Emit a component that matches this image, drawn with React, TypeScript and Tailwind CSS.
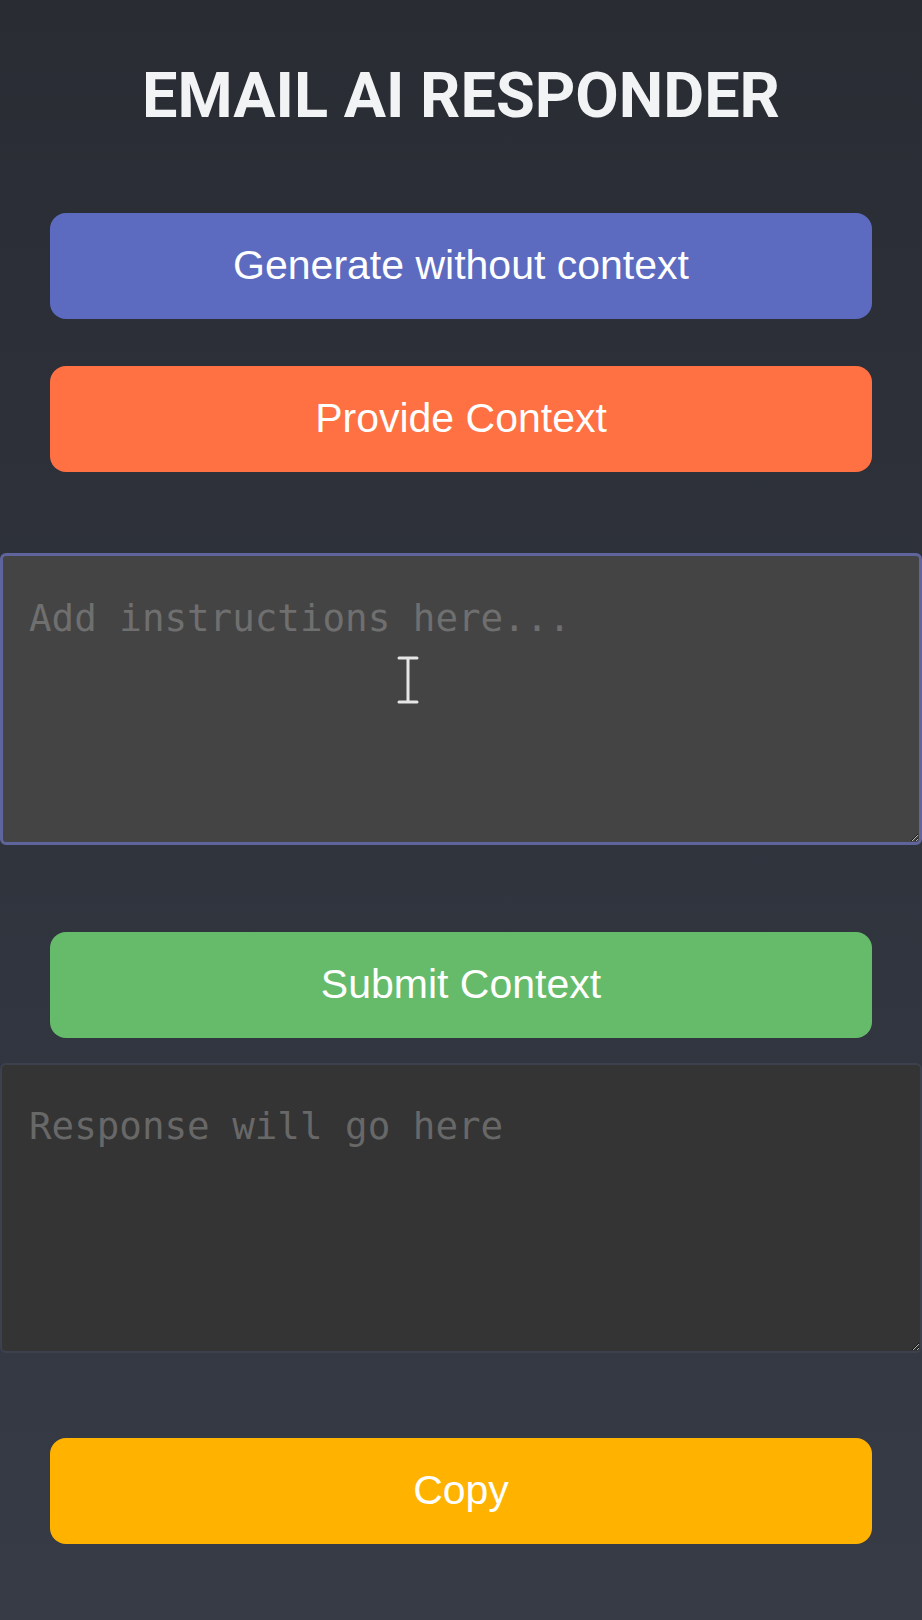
export default function App() {
  return (
    <div className="relative min-h-[1620px] w-full bg-gradient-to-b from-[#292c33] to-[#363b46] font-['Liberation_Sans',Arial,sans-serif]">
      <h1 className="pt-[58px] text-center font-['Roboto',sans-serif] text-[63px] font-bold leading-[76px] text-[#f2f3f5]">
        EMAIL AI RESPONDER
      </h1>

      <div className="mt-[79px] flex flex-col gap-[47px] px-[50px]">
        <ActionButton label="Generate without context" color="bg-[#5c6bc0]" />
        <ActionButton label="Provide Context" color="bg-[#ff7043]" />
      </div>

      <div className="relative mt-[81px]">
        <textarea
          rows={5}
          placeholder="Add instructions here..."
          className="block h-[292px] w-full rounded-[6px] border-[3px] border-[#5f649c] bg-[#444444] px-[26px] pt-[34px] font-['DejaVu_Sans_Mono',monospace] text-[37.5px] text-[#dddddd] outline-none placeholder:text-[#6f6f6f]"
        />
        <svg
          className="pointer-events-none absolute left-[396px] top-[103px]"
          width="24"
          height="48"
          viewBox="0 0 24 48"
        >
          <path
            d="M3 2h18M3 46h18M12 2v44"
            stroke="#e6e6e6"
            strokeWidth="3"
            fill="none"
            strokeLinecap="round"
          />
        </svg>
      </div>

      <div className="mt-[87px] px-[50px]">
        <ActionButton label="Submit Context" color="bg-[#66bb6a]" />
      </div>

      <textarea
        rows={5}
        readOnly
        placeholder="Response will go here"
        className="mt-[25px] block h-[290px] w-full rounded-[6px] border-2 border-[#3c414d] bg-[#343434] px-[27px] pt-[33px] font-['DejaVu_Sans_Mono',monospace] text-[37.5px] text-[#dddddd] outline-none placeholder:text-[#686868]"
      />

      <div className="mt-[85px] px-[50px] pb-[75px]">
        <ActionButton label="Copy" color="bg-[#ffb300]" />
      </div>
    </div>
  )
}

function ActionButton({ label, color }: { label: string; color: string }) {
  return (
    <button
      className={`h-[106px] w-full cursor-pointer rounded-[16px] text-[41px] text-white ${color}`}
    >
      {label}
    </button>
  )
}
